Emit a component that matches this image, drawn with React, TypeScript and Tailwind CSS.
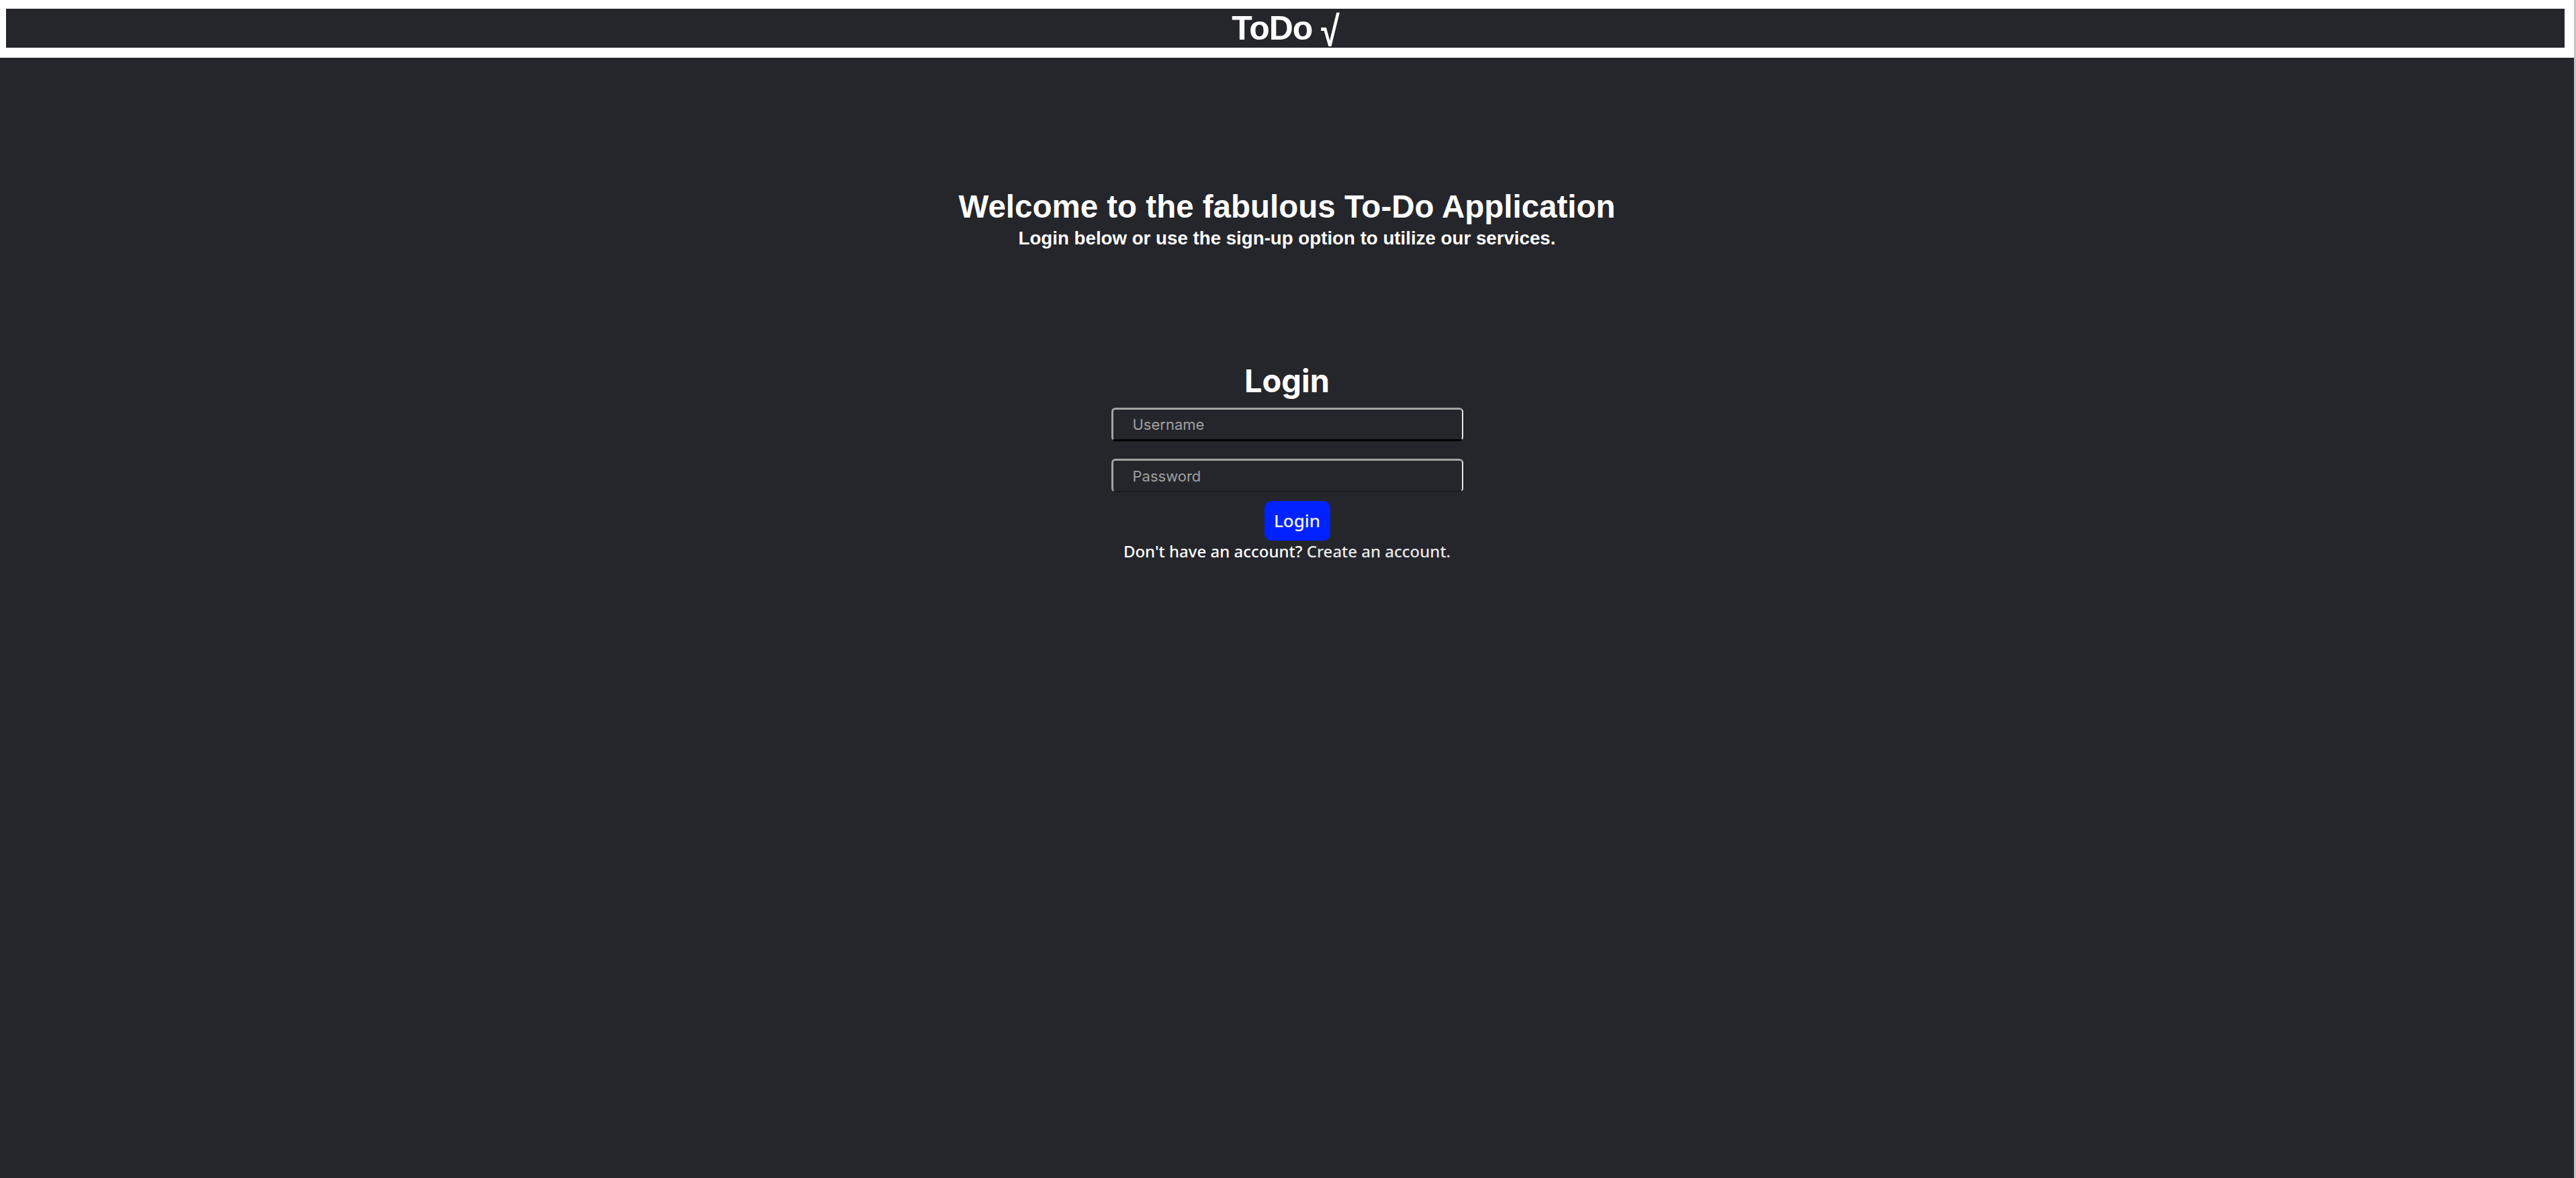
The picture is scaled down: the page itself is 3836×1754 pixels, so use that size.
import React from "react";

export default function App() {
  return (
    <div className="flex min-h-screen w-full bg-white">
      <div className="flex min-h-screen flex-1 flex-col">
        <header className="pl-[9px] pr-[14px] pt-[13px] pb-[15px] bg-white">
          <div className="flex h-[58px] items-center justify-center bg-[#25262b]">
            <span className="font-['Liberation_Sans',sans-serif] text-[50px] font-bold leading-none tracking-[-1px] text-white">
              ToDo <span className="inline-block translate-y-[5px] scale-y-[1.25]">√</span>
            </span>
          </div>
        </header>
        <main className="flex flex-1 flex-col items-center bg-[#25262b] pt-[194px] text-white">
          <h1 className="font-['Liberation_Sans',sans-serif] text-[47.5px] font-bold leading-[56px]">
            Welcome to the fabulous To-Do Application
          </h1>
          <p className="mt-[3px] font-['Liberation_Sans',sans-serif] text-[27.7px] font-bold leading-[32px]">
            Login below or use the sign-up option to utilize our services.
          </p>
          <h2 className="mt-[168px] font-['Inter',sans-serif] text-[47px] font-bold leading-[56px]">
            Login
          </h2>
          <form className="mt-[12px] flex flex-col items-center" onSubmit={(e) => e.preventDefault()}>
            <input
              type="text"
              placeholder="Username"
              className="h-[50px] w-[524px] rounded-[6px] border-t-[3px] border-l-[3px] border-r-[2px] border-b-[3px] border-t-[#a3a3a3] border-l-[#a3a3a3] border-r-[#e6e6e6] border-b-black bg-[#25262b] pl-[29px] font-['Inter',sans-serif] text-[22px] text-white placeholder:text-[#a0a0a0] outline-none"
            />
            <input
              type="password"
              placeholder="Password"
              className="mt-[26px] h-[50px] w-[524px] rounded-[6px] border-t-[3px] border-l-[3px] border-r-[2px] border-b-[2px] border-t-[#a3a3a3] border-l-[#a3a3a3] border-r-[#e6e6e6] border-b-[#1c1d21] bg-[#25262b] pl-[29px] font-['Inter',sans-serif] text-[22px] text-white placeholder:text-[#a0a0a0] outline-none"
            />
            <button
              type="submit"
              className="ml-[30px] mt-[13px] flex h-[59px] w-[98px] items-center justify-center rounded-[10px] bg-[#0022ff] font-['Noto_Sans',sans-serif] text-[26px] font-medium text-[#f2f2f2]"
            >
              Login
            </button>
          </form>
          <p className="mt-[2px] font-['Noto_Sans',sans-serif] text-[24px] font-medium leading-[28px] text-white">
            Don't have an account? <span className="text-[#e8e8ea]">Create an account.</span>
          </p>
        </main>
      </div>
      <div className="w-[3px] bg-[#c4c4c4]" />
    </div>
  );
}
